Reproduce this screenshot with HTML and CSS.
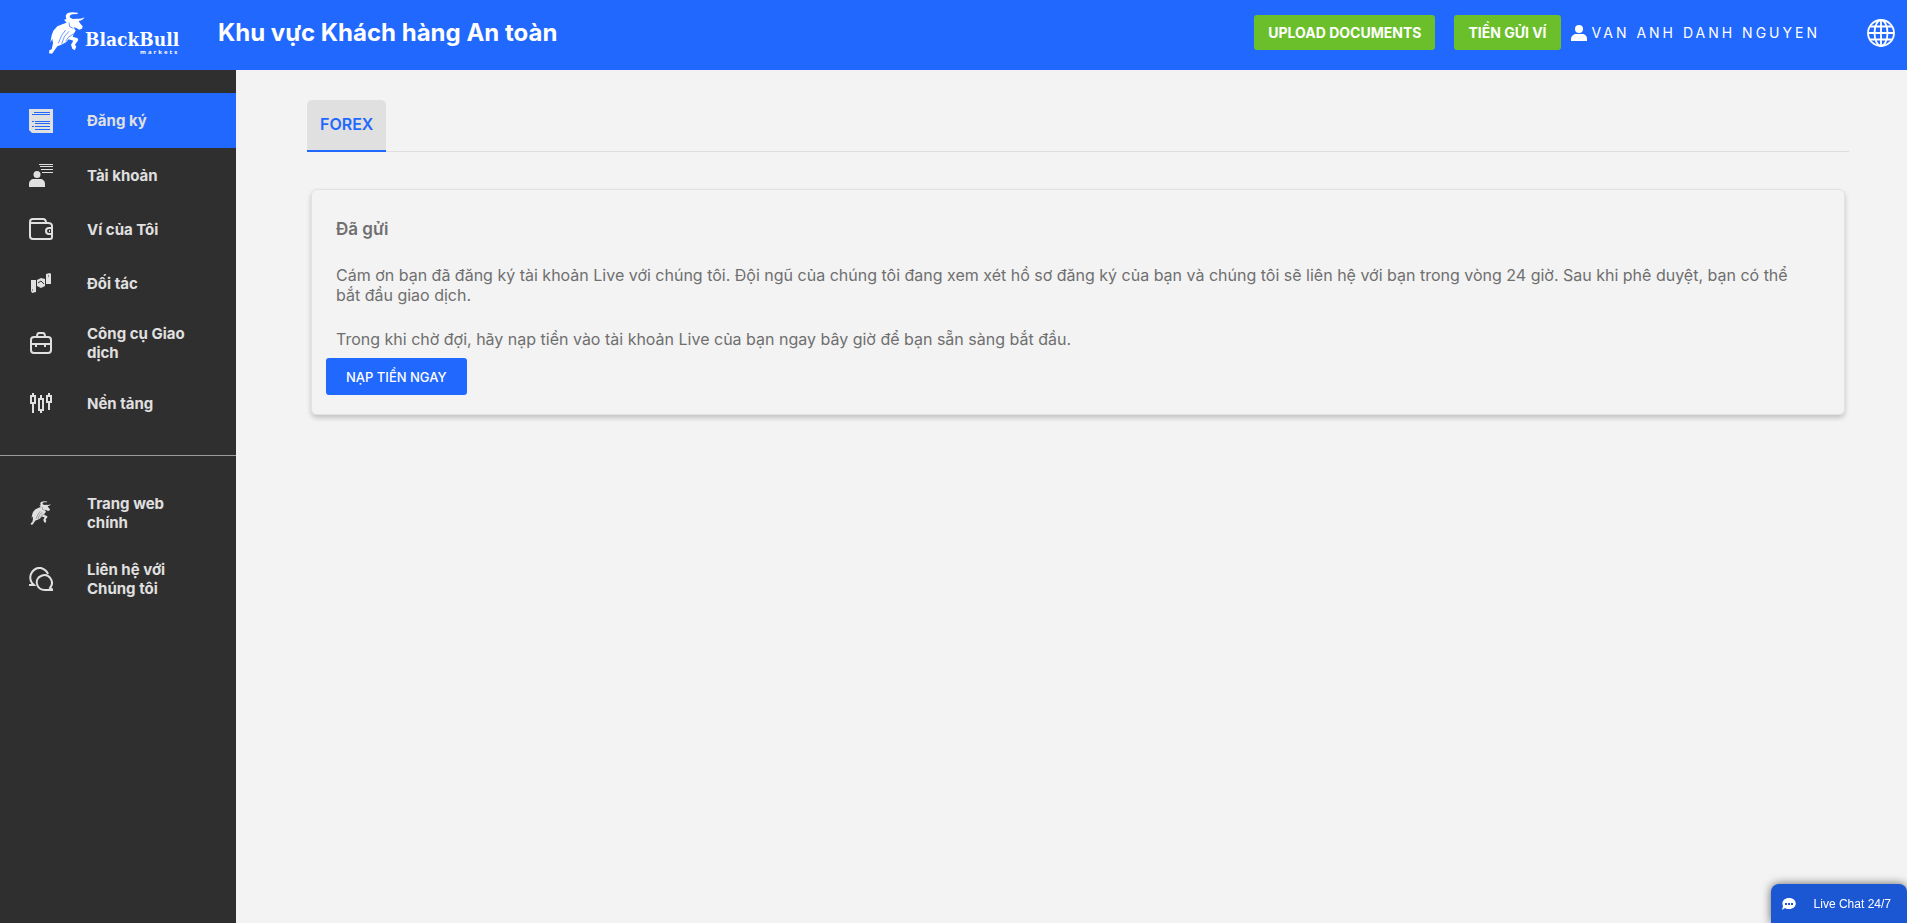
FILE: index.html
```
<!DOCTYPE html>
<html lang="vi">
<head>
    <meta charset="UTF-8">
    <meta name="viewport" content="width=device-width, initial-scale=1.0">
    <title>BlackBull Markets</title>

    <link rel="stylesheet" href="styles.css">
</head>
<body>

    <!-- bull is used in the header logo and in the menu -->
    <svg class="sprite" aria-hidden="true">
        <symbol id="bull" viewBox="0 0 108 126">
            <path d="M52 22L50 11Q54 1 70 1L86 2V6L70 7Q60 9 63 17L72 21 84 20Q94 22 106 16 102 26 89 27L93 34 101 43 99 50 91 53 80 47 74 46 80 56 74 66 71 74 86 79 88 84 78 98 82 104 77 115 70 110 66 98 73 86 59 82 51 91 37 98 25 103 15 117 9 125 0 124 1 115 8 112 12 94 10 80 4 92 8 70 13 56 25 43 42 36 53 32 45 23z"/>
            <path class="bull-cut" d="M60 32l2 12 11 5M50 54L38 70 28 94M60 58L46 74 38 96M74 65L58 76 50 88"/>
        </symbol>
    </svg>

    <header class="header">
        <a class="logo" href="#">
            <svg class="logo-bull"><use href="#bull"/></svg>
            <span class="logo-text">BlackBull<small>markets</small></span>
        </a>
        <h1 class="header-title">Khu vực Khách hàng An toàn</h1>
        <div class="header-actions">
            <button class="btn btn-green" type="button">UPLOAD DOCUMENTS</button>
            <button class="btn btn-green" type="button">TIỀN GỬI VÍ</button>
        </div>
        <a class="user" href="#">
            <svg width="16" height="16" viewBox="0 0 16 16" fill="#fff"><circle cx="8" cy="4" r="4"/><path d="M0 16v-2c0-3 3-5 5-5h6c3 0 5 2 5 5v2z"/></svg>
            VAN ANH DANH NGUYEN
        </a>
        <button class="lang" type="button" aria-label="Ngôn ngữ">
            <svg width="28" height="28" viewBox="0 0 28 28" fill="none" stroke="#fff" stroke-width="1.8"><circle cx="14" cy="14" r="13"/><ellipse cx="14" cy="14" rx="6.5" ry="13"/><path d="M14 1v26M1 14h26M3 7.500h22M3 20.500h22"/></svg>
        </button>
    </header>

    <div class="wrapper">
        <nav class="sidebar">
            <ul class="menu">
                <li><a class="menu-item menu-active" href="#">
                    <svg class="icon" viewBox="0 0 24 24"><path fill="#e0e0e0" d="M0 0h24v24H3l-3-3z"/><path stroke="#2168ff" d="M5 3.500h16M3 5.500h18M3 12.500h2M6 12.500h15M6 14.500h15M3 17.500h2M6 17.500h15M6 20.500h15"/></svg>
                    <span>Đăng ký</span>
                </a></li>
                <li><a class="menu-item" href="#">
                    <svg class="icon" viewBox="0 0 24 24"><g fill="#e0e0e0"><circle cx="8" cy="11.500" r="3.500"/><path d="M0 24v-3c0-3 2-5 5-5h6c3 0 5 2 5 5v3z"/></g><path stroke="#e0e0e0" d="M10 1.500h14M11 3.500h13M12 6.500h12M13 9.500h11"/></svg>
                    <span>Tài khoản</span>
                </a></li>
                <li><a class="menu-item" href="#">
                    <svg class="icon icon-line" viewBox="0 0 24 24"><path d="M4 2h10c2 0 3 1 3 4h2c2 0 4 1 4 3v11c0 1-1 2-2 2H4c-2 0-3-1-3-3V5c0-2 1-3 3-3zM1 6h16M23 11h-3c-4 0-4 6 0 6h3M20 14h1"/></svg>
                    <span>Ví của Tôi</span>
                </a></li>
                <li><a class="menu-item" href="#">
                    <svg class="icon" viewBox="0 0 24 24" fill="#e0e0e0"><path d="M2 9h5v12l-4 1-1-2zM17 3l4-1 1 1v10h-5zM8 9l4-2 4 1v7l-4 2-4-2z"/><path fill="none" stroke="#2f2f2f" d="M9 12l3-2 3 3M3 19h1M19 5h1"/></svg>
                    <span>Đối tác</span>
                </a></li>
                <li><a class="menu-item" href="#">
                    <svg class="icon icon-line" viewBox="0 0 24 24"><rect x="2" y="6" width="20" height="16" rx="3"/><path d="M8 6c0-3 1-4 2-4h4c1 0 2 1 2 4M2 13h20M7 13v3M16 13v3"/></svg>
                    <span>Công cụ Giao dịch</span>
                </a></li>
                <li><a class="menu-item" href="#">
                    <svg class="icon icon-line" viewBox="0 0 24 24"><path d="M4 2v3M4 12v10M12 4v4M12 19v3M20 2v3M20 11v8"/><rect x="2" y="5" width="4" height="7"/><rect x="10" y="8" width="4" height="11"/><rect x="18" y="5" width="4" height="6"/></svg>
                    <span>Nền tảng</span>
                </a></li>
            </ul>
            <ul class="menu menu-bottom">
                <li><a class="menu-item" href="#">
                    <svg class="icon"><use href="#bull"/></svg>
                    <span>Trang web chính</span>
                </a></li>
                <li><a class="menu-item" href="#">
                    <svg class="icon icon-line" viewBox="0 0 24 24"><path d="M0 18h5l-2-2C-2 8 5 0 12 1c3 1 6 3 7 6M24 23h-8c-9 0-11-11-4-14 8-4 14 6 9 12z"/></svg>
                    <span>Liên hệ với Chúng tôi</span>
                </a></li>
            </ul>
        </nav>

        <main class="content">
            <div class="tabs">
                <a class="tab" href="#">FOREX</a>
            </div>
            <section class="card">
                <h2 class="card-title">Đã gửi</h2>
                <p class="card-text">Cám ơn bạn đã đăng ký tài khoản Live với chúng tôi. Đội ngũ của chúng tôi đang xem xét hồ sơ đăng ký của bạn và chúng tôi sẽ liên hệ với bạn trong vòng 24 giờ. Sau khi phê duyệt, bạn có thể bắt đầu giao dịch.</p>
                <p class="card-text">Trong khi chờ đợi, hãy nạp tiền vào tài khoản Live của bạn ngay bây giờ để bạn sẵn sàng bắt đầu.</p>
                <button class="btn btn-blue" type="button">NẠP TIỀN NGAY</button>
            </section>
        </main>
    </div>

    <button class="chat" type="button">
        <svg width="14" height="12" viewBox="0 0 14 12"><path fill="#fff" d="M7 0c9 0 9 11 0 11-1 0-3 0-4-1l-3 2 1-4C-1 4 2 0 7 0z"/><path fill="#1b56d3" d="M3 5h2v2H3zM6 5h2v2H6zM9 5h2v2H9z"/></svg>
        Live Chat 24/7
    </button>

</body>
</html>
```
FILE: styles.css
```
* {
    padding: 0;
    margin: 0;
    box-sizing: border-box;
}

body {
    min-height: 100vh;
    display: flex;
    flex-direction: column;

    background-color: #f3f3f3;
    font-family: Inter, "Noto Sans", sans-serif;
    font-size: 16px;
    color: #6f6f6f;
}

a {
    color: inherit;
    text-decoration: none;
}

button {
    border: none;
    font-family: inherit;
    color: white;
    cursor: pointer;
}

.sprite {
    width: 0;
    height: 0;
    position: absolute;
}

.header {
    height: 70px;
    padding: 0 12px 5px 49px;

    display: flex;
    align-items: center;

    background-color: #2168ff;
    color: white;
}

.logo {
    width: 169px;
    display: flex;
    align-items: center;
}

.logo-bull {
    width: 36px;
    height: 42px;
    flex-shrink: 0;
    fill: white;
    color: #2168ff;
}

.bull-cut {
    fill: none;
    stroke: currentColor;
    stroke-width: 2px;
}

.logo-text {
    padding-top: 18px;

    display: flex;
    flex-direction: column;

    font: bold 19px/20px "DejaVu Serif Condensed", "DejaVu Serif", serif;
}

.logo-text small {
    align-self: flex-end;
    font: bold 6px/6px "Open Sans", sans-serif;
    letter-spacing: 2px;
}

.header-title {
    font-size: 24px;
    font-weight: 700;
}

.header-actions {
    margin-left: auto;
    display: flex;
    gap: 19px;
}

.btn {
    border-radius: 3px;
    white-space: nowrap;
}

.btn-green {
    height: 35px;
    padding: 0 14px;

    background-color: #6abf2a;
    font-size: 14px;
    font-weight: 700;
}

.user {
    margin-left: 10px;

    display: flex;
    align-items: center;
    gap: 5px;

    font-size: 14px;
    letter-spacing: 3px;
    white-space: nowrap;
}

.lang {
    height: 28px;
    margin-left: 47px;
    background: none;
}

.wrapper {
    flex: 1;
    display: flex;
}

.sidebar {
    width: 236px;
    padding-top: 23px;
    flex-shrink: 0;

    background-color: #2f2f2f;
    color: #e0e0e0;
}

.menu {
    list-style: none;
}

.menu-bottom {
    margin-top: 25px;
    padding-top: 24px;
    border-top: 1px solid #9b9b9b;
}

.menu-item {
    min-height: 54px;
    padding: 14px 29px;

    display: flex;
    align-items: center;
    gap: 34px;

    font-size: 15px;
    font-weight: 700;
    line-height: 19px;
}

.menu-item span {
    max-width: 112px;
}

.menu-active {
    min-height: 55px;
    background-color: #2168ff;
}

.icon {
    width: 24px;
    height: 24px;
    flex-shrink: 0;
    fill: #e0e0e0;
    color: #2f2f2f;
}

.icon-line {
    fill: none;
    stroke: #e0e0e0;
    stroke-width: 2px;
}

.content {
    flex: 1;
    padding: 30px 58px 30px 71px;
}

.tabs {
    display: flex;
    box-shadow: inset 0 -1px #dedede;
}

.tab {
    height: 52px;
    padding: 0 13px 2px;

    display: flex;
    align-items: center;

    background-color: #e0e0e0;
    border-bottom: 2px solid #2168ff;
    border-radius: 5px 5px 0 0;

    font-size: 16px;
    font-weight: 600;
    color: #2168ff;
}

.card {
    margin: 37px 4px 0;
    padding: 28px 44px 19px 24px;

    border: 1px solid #e2e2e2;
    border-radius: 6px;
    box-shadow: 0 3px 5px #0003;
}

.card-title {
    margin-bottom: 25px;
    font-size: 17px;
    font-weight: 600;
    line-height: 22px;
}

.card-text {
    margin-bottom: 24px;
    line-height: 20px;
}

.card-text:last-of-type {
    margin-bottom: 9px;
}

.btn-blue {
    height: 37px;
    margin-left: -10px;
    padding: 0 20px;

    background-color: #2168ff;
    font-size: 13px;
    font-weight: 500;
}

.chat {
    height: 39px;
    padding: 0 16px 0 11px;

    position: fixed;
    right: 0;
    bottom: 0;

    display: flex;
    align-items: center;
    gap: 18px;

    background-color: #1b56d3;
    border-radius: 8px 8px 0 0;
    box-shadow: 0 0 10px #0009;

    font: 12px "Liberation Sans", Arial, sans-serif;
}
```
